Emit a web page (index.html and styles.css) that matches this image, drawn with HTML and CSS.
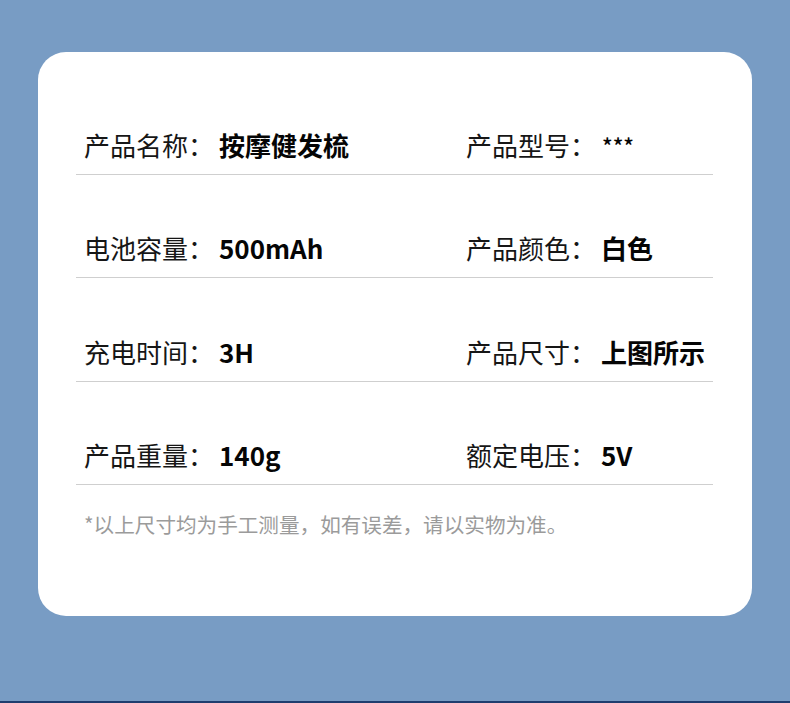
FILE: index.html
```html
<!DOCTYPE html>
<html lang="zh-CN">
<head>
<meta charset="utf-8">
<title>产品参数</title>
<link rel="stylesheet" href="styles.css">
</head>
<body>
<div class="page">
  <div class="card">
    <div class="row">
      <div class="cell"><span class="label">产品名称：</span><span class="value">按摩健发梳</span></div>
      <div class="cell"><span class="label">产品型号：</span><span class="value light">***</span></div>
    </div>
    <div class="row">
      <div class="cell"><span class="label">电池容量：</span><span class="value">500mAh</span></div>
      <div class="cell"><span class="label">产品颜色：</span><span class="value">白色</span></div>
    </div>
    <div class="row">
      <div class="cell"><span class="label">充电时间：</span><span class="value">3H</span></div>
      <div class="cell"><span class="label">产品尺寸：</span><span class="value">上图所示</span></div>
    </div>
    <div class="row">
      <div class="cell"><span class="label">产品重量：</span><span class="value">140g</span></div>
      <div class="cell"><span class="label">额定电压：</span><span class="value">5V</span></div>
    </div>
    <p class="note">*以上尺寸均为手工测量，如有误差，请以实物为准。</p>
  </div>
  <div class="bottom-strip"></div>
</div>
</body>
</html>
```
FILE: styles.css
```css
html, body {
  margin: 0;
  padding: 0;
}
body {
  background: #789cc4;
  font-family: "Noto Sans CJK SC", "Noto Sans", sans-serif;
  width: 790px;
  height: 703px;
  overflow: hidden;
}
.page {
  position: relative;
  width: 790px;
  height: 703px;
  padding-top: 52px;
  box-sizing: border-box;
}
.card {
  margin-left: 38px;
  width: 714px;
  height: 564px;
  background: #ffffff;
  border-radius: 28px;
  padding: 19.67px 39px 0 38px;
  box-sizing: border-box;
}
.row {
  display: grid;
  grid-template-columns: 382px 1fr;
  align-items: end;
  height: 103.33px;
  box-sizing: border-box;
  padding: 0 0 16px 8px;
  border-bottom: 1px solid #cfcfcf;
}
.cell {
  display: flex;
  align-items: center;
  font-size: 26px;
  line-height: 26px;
  white-space: nowrap;
}
.label {
  color: #161616;
  font-weight: 400;
}
.value {
  color: #050505;
  font-weight: 700;
  margin-left: 5px;
}
.value.light {
  font-weight: 500;
  font-size: 22px;
  margin-left: 6px;
}
.note {
  margin: 29px 0 0 8px;
  font-size: 20.6px;
  line-height: 21px;
  color: #9b9b9b;
  white-space: nowrap;
}
.bottom-strip {
  position: absolute;
  left: 0;
  right: 0;
  bottom: 0;
  height: 2px;
  background: #1f3d6e;
}
```
